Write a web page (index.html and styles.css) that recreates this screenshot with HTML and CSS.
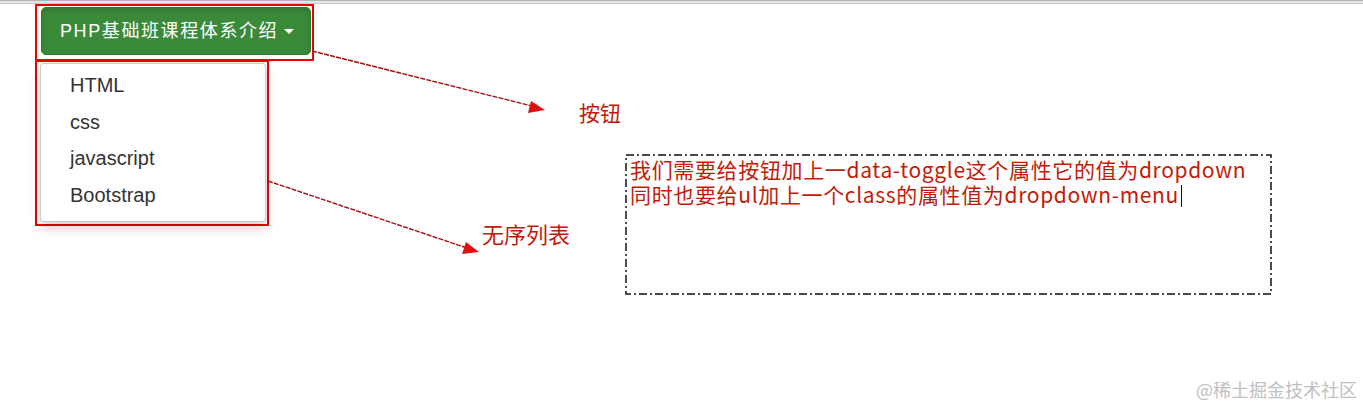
FILE: index.html
```html
<!DOCTYPE html>
<html lang="zh-CN">
<head>
<meta charset="utf-8">
<title>dropdown</title>
<link rel="stylesheet" href="styles.css">
</head>
<body>
<div class="page">
  <div class="topbar"></div>
  <div class="demo">
    <div class="frame frame-btn">
      <button class="btn"><span class="btn-label">PHP基础班课程体系介绍</span><span class="caret"></span></button>
    </div>
    <div class="frame frame-menu">
      <ul class="menu">
        <li>HTML</li>
        <li>css</li>
        <li>javascript</li>
        <li>Bootstrap</li>
      </ul>
    </div>
  </div>

  <svg class="arrows" width="1363" height="409" viewBox="0 0 1363 409">
    <line x1="312" y1="51" x2="536" y2="107" class="arrow-line"/>
    <polygon points="545,110 531,101 528,113" class="arrow-head"/>
    <line x1="268" y1="181" x2="470" y2="249" class="arrow-line"/>
    <polygon points="479,252 466,242 462,254" class="arrow-head"/>
  </svg>

  <div class="label label-btn">按钮</div>
  <div class="label label-ul">无序列表</div>

  <div class="note">
    <svg class="note-border" width="648" height="142" viewBox="0 0 648 142">
      <rect x="1" y="1" width="645" height="139" class="dashdot"/>
    </svg>
    <p class="note-text">我们需要给按钮加上一data-toggle这个属性它的值为dropdown<br>同时也要给ul加上一个class的属性值为dropdown-menu<span class="cursor"></span></p>
  </div>

  <div class="watermark">@稀土掘金技术社区</div>
</div>
</body>
</html>
```

FILE: styles.css
```css
html, body {
  margin: 0;
  padding: 0;
  background: #ffffff;
}

.page {
  position: relative;
  width: 1363px;
  height: 409px;
  overflow: hidden;
  font-family: "Liberation Sans", "Noto Sans CJK SC", sans-serif;
}

.topbar {
  height: 4px;
  background: linear-gradient(#b4b4b4 0, #b4b4b4 1px, #e6e6e6 1px, #e6e6e6 3px, #c8c8c8 3px);
}

.demo {
  display: flex;
  flex-direction: column;
  align-items: flex-start;
  margin-left: 35px;
}

.frame {
  border: 2px solid #f00000;
  box-sizing: border-box;
}

.frame-btn {
  width: 279px;
  height: 57px;
  padding: 1px 0 0 4px;
}

.btn {
  display: flex;
  align-items: center;
  width: 270px;
  height: 48px;
  margin: 0;
  padding: 0 0 0 18px;
  border: 1px solid #2f7a2f;
  border-radius: 5px;
  background: #3a8a3a;
  color: #ffffff;
  font: 18px/1 "Liberation Sans", "Noto Sans CJK SC", sans-serif;
  box-sizing: border-box;
  box-shadow: inset 0 3px 5px rgba(0, 0, 0, 0.125);
}

.btn-label {
  font-size: 18px;
  letter-spacing: 1.6px;
  white-space: nowrap;
}

.caret {
  display: inline-block;
  width: 0;
  height: 0;
  margin-left: 6px;
  border-top: 5px solid #ffffff;
  border-left: 5px solid transparent;
  border-right: 5px solid transparent;
}

.frame-menu {
  width: 234px;
  height: 166px;
  margin-top: -1px;
  padding: 1px 0 0 3px;
}

.menu {
  list-style: none;
  margin: 0;
  padding: 3px 0 0 0;
  width: 226px;
  height: 159px;
  box-sizing: border-box;
  border: 1px solid rgba(0, 0, 0, 0.2);
  border-radius: 4px;
  background: #ffffff;
  box-shadow: 0 6px 12px rgba(0, 0, 0, 0.18);
}

.menu li {
  height: 36.5px;
  line-height: 36.5px;
  padding-left: 29px;
  font-size: 20px;
  color: #333333;
}

.arrows {
  position: absolute;
  left: 0;
  top: 0;
  pointer-events: none;
}

.arrow-line {
  stroke: #a01010;
  stroke-width: 1.4;
  stroke-dasharray: 5 1.2;
}

.arrow-head {
  fill: #e01010;
}

.label {
  position: absolute;
  font-family: "Noto Sans CJK SC", sans-serif;
  color: #c01a0a;
  font-size: 21px;
  line-height: 26px;
}

.label-btn {
  left: 579px;
  top: 99px;
}

.label-ul {
  left: 482px;
  top: 220px;
  font-size: 22px;
}

.note {
  position: absolute;
  left: 625px;
  top: 154px;
  width: 648px;
  height: 142px;
}

.note-border {
  position: absolute;
  left: 0;
  top: 0;
}

.dashdot {
  fill: none;
  stroke: #111111;
  stroke-width: 1.5;
  stroke-dasharray: 8 3 2 3;
}

.note-text {
  margin: 0;
  padding: 3px 0 0 5px;
  font-family: "Noto Sans CJK SC", sans-serif;
  font-size: 21px;
  line-height: 25px;
  color: #c41a08;
  letter-spacing: 0.65px;
  white-space: nowrap;
}

.cursor {
  display: inline-block;
  width: 0;
  height: 22px;
  margin-left: 2px;
  border-left: 1.5px solid #111111;
  vertical-align: -4px;
}

.watermark {
  position: absolute;
  right: 6px;
  bottom: 7px;
  font-family: "Noto Sans CJK SC", sans-serif;
  font-size: 18px;
  color: #c0c0c0;
}
```
